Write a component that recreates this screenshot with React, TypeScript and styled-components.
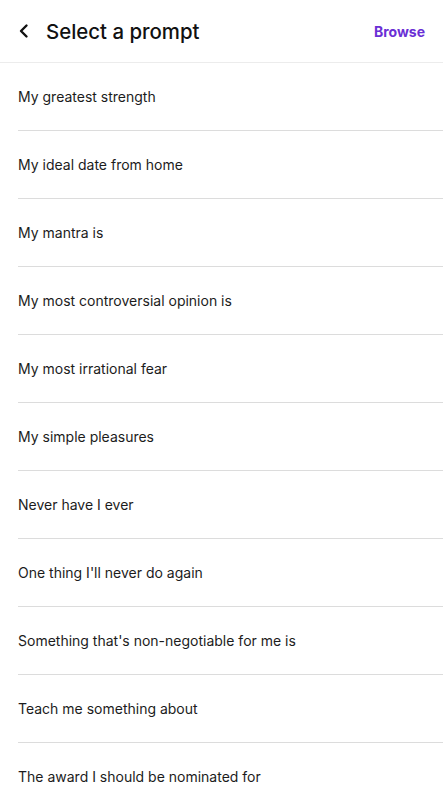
import styled, { createGlobalStyle } from "styled-components"

const GlobalStyle = createGlobalStyle`
  body {
    margin: 0;
    background: #ffffff;
    font-family: "Inter", "Liberation Sans", sans-serif;
    color: #1a1a1a;
  }
`;

const Page = styled.div`
  width: 100%;
  min-height: 800px;
  background: #ffffff;
  display: flex;
  flex-direction: column;
`;

const Header = styled.header`
  height: 62px;
  display: flex;
  align-items: center;
  justify-content: space-between;
  padding: 0 18px 0 16px;
  border-bottom: 1px solid #ececec;
`;

const TitleGroup = styled.div`
  display: flex;
  align-items: center;
  gap: 14px;
`;

const BackButton = styled.button`
  border: none;
  background: none;
  padding: 0;
  display: flex;
  align-items: center;
  cursor: pointer;
`;

const Title = styled.h1`
  margin: 0;
  font-size: 20.4px;
  font-weight: 500;
  color: #111111;
`;

const BrowseLink = styled.button`
  border: none;
  background: none;
  padding: 0;
  font-family: inherit;
  font-size: 14px;
  font-weight: 700;
  color: #6a2fd5;
  cursor: pointer;
`;

const List = styled.ul`
  list-style: none;
  margin: 0;
  padding: 0 0 0 18px;
`;

const Item = styled.li`
  height: 67px;
  display: flex;
  align-items: center;
  border-bottom: 1px solid #dcdcdc;
  font-size: 14px;
  color: #1c1c1c;
`;

const prompts = [
  "My greatest strength",
  "My ideal date from home",
  "My mantra is",
  "My most controversial opinion is",
  "My most irrational fear",
  "My simple pleasures",
  "Never have I ever",
  "One thing I'll never do again",
  "Something that's non-negotiable for me is",
  "Teach me something about",
  "The award I should be nominated for",
];

export default function App() {
  return (
    <Page>
      <GlobalStyle />
      <Header>
        <TitleGroup>
          <BackButton aria-label="Back">
            <svg width="16" height="16" viewBox="0 0 16 16" fill="none">
              <path d="M10.5 2.5 L5 8 L10.5 13.5" stroke="#111" strokeWidth="2.4" strokeLinecap="round" strokeLinejoin="round" />
            </svg>
          </BackButton>
          <Title>Select a prompt</Title>
        </TitleGroup>
        <BrowseLink>Browse</BrowseLink>
      </Header>
      <List>
        {prompts.map((p) => (
          <Item key={p}>{p}</Item>
        ))}
      </List>
    </Page>
  );
}
